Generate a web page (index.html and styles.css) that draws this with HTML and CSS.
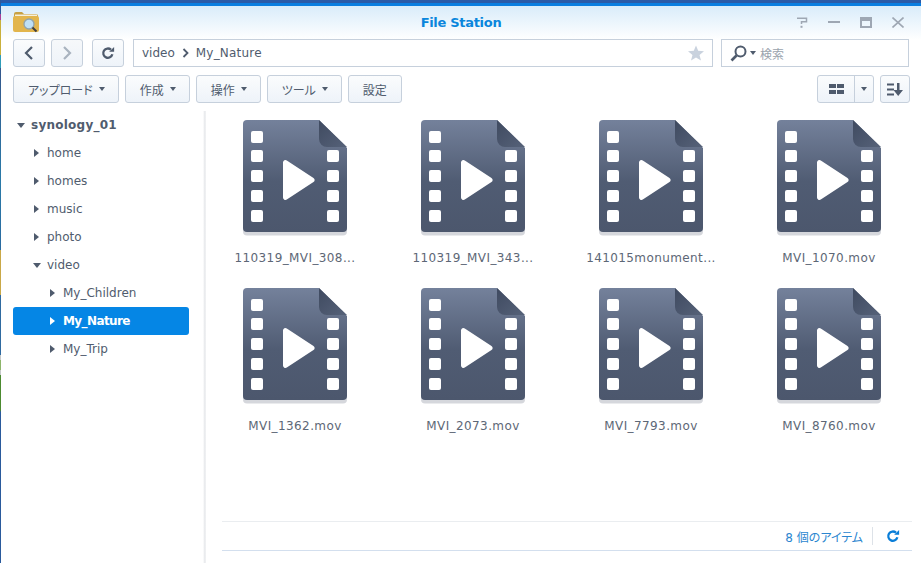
FILE: index.html
```html
<!DOCTYPE html>
<html>
<head>
    <title>File Station</title>
    <link rel="stylesheet" href="styles.css">
</head>
<body>
    <svg class="defs" width="0" height="0">
        <defs>
            <linearGradient id="fileBody" x1="0" y1="0" x2="0" y2="1">
                <stop offset="0" stop-color="#74819b"/>
                <stop offset="0.55" stop-color="#505c73"/>
                <stop offset="1" stop-color="#4c576d"/>
            </linearGradient>
            <linearGradient id="fileFold" x1="0" y1="0" x2="1" y2="1">
                <stop offset="0" stop-color="#3f4a60"/>
                <stop offset="1" stop-color="#566279"/>
            </linearGradient>
            <symbol id="videoFile" viewBox="0 0 104 116">
                <path d="M4 0H76L104 28V110a4 4 0 0 1-4 4H4a4 4 0 0 1-4-4V4a4 4 0 0 1 4-4Z" fill="#d5d7dc" transform="translate(0 1.5)"/>
                <path d="M4 0H76L104 28V108a4 4 0 0 1-4 4H4a4 4 0 0 1-4-4V4a4 4 0 0 1 4-4Z" fill="url(#fileBody)"/>
                <path d="M76 0L104 27H84a8 8 0 0 1-8-8Z" fill="url(#fileFold)"/>
                <g fill="#fff">
                    <rect x="8" y="11" width="12" height="12" rx="2"/>
                    <rect x="8" y="30" width="12" height="12" rx="2"/>
                    <rect x="8" y="50" width="12" height="12" rx="2"/>
                    <rect x="8" y="70" width="12" height="12" rx="2"/>
                    <rect x="8" y="90" width="12" height="12" rx="2"/>
                    <rect x="84" y="30" width="12" height="12" rx="2"/>
                    <rect x="84" y="50" width="12" height="12" rx="2"/>
                    <rect x="84" y="70" width="12" height="12" rx="2"/>
                    <rect x="84" y="90" width="12" height="12" rx="2"/>
                    <path d="M40 42.500a2.500 2.500 0 0 1 3.800-2.100L70.500 57.900a2.500 2.500 0 0 1 0 4.200L43.800 79.600a2.500 2.500 0 0 1-3.800-2.100Z"/>
                </g>
            </symbol>
            <symbol id="reload" viewBox="0 0 16 16">
                <path d="M13 9.500A5.300 5.300 0 1 1 11.400 4.200" fill="none" stroke="currentColor" stroke-width="2.600"/>
                <path d="M9.300 6.700H15V1Z" fill="currentColor"/>
            </symbol>
        </defs>
    </svg>

    <div class="desktop-strip"></div>
    <div class="window">
        <div class="titlebar">
            <svg class="app-icon" width="26" height="22" viewBox="0 0 26 22">
                <path d="M1 3a2 2 0 0 1 2-2h6l2 2h12a2 2 0 0 1 2 2v2H1Z" fill="#c8a143"/>
                <rect x="2" y="3.500" width="22" height="3" fill="#f6f0dc"/>
                <path d="M0 7a2 2 0 0 1 2-2h22a2 2 0 0 1 2 2v12a2 2 0 0 1-2 2H2a2 2 0 0 1-2-2Z" fill="#e2b54d"/>
                <circle cx="16" cy="13" r="5" fill="#bfe0f5" stroke="#8fa3ad" stroke-width="1.300"/>
                <path d="M19.500 16.500L23.500 20.500" stroke="#3f3f3f" stroke-width="2"/>
            </svg>
            <span class="title">File Station</span>
            <div class="win-controls">
                <svg width="12" height="11" viewBox="0 0 12 11"><path d="M1 1.200H10.500V4.800H5.500V7" fill="none" stroke="#9ea7b3" stroke-width="1.500"/><rect x="4.500" y="8.800" width="2" height="2" fill="#9ea7b3"/></svg>
                <svg width="12" height="11" viewBox="0 0 12 11"><rect x="0" y="4" width="12" height="2" fill="#9ea7b3"/></svg>
                <svg width="12" height="11" viewBox="0 0 12 11"><path d="M0 0h12v11H0Z M2 4v5h8V4Z" fill="#9ea7b3" fill-rule="evenodd"/></svg>
                <svg width="12" height="11" viewBox="0 0 12 11"><path d="M0.500 0.500L11.500 10.500M11.500 0.500L0.500 10.500" stroke="#9ea7b3" stroke-width="1.600"/></svg>
            </div>
        </div>

        <div class="navbar">
            <button class="btn btn-nav"><svg width="10" height="14" viewBox="0 0 10 14"><path d="M8 1L2 7L8 13" fill="none" stroke="#4f5b6d" stroke-width="2.200"/></svg></button>
            <button class="btn btn-nav btn-off"><svg width="10" height="14" viewBox="0 0 10 14"><path d="M2 1L8 7L2 13" fill="none" stroke="#a9b3bf" stroke-width="2.200"/></svg></button>
            <button class="btn btn-nav btn-reload"><svg class="reload-icon" width="14" height="14"><use href="#reload"/></svg></button>
            <div class="pathbar">
                <span>video</span>
                <svg width="7" height="10" viewBox="0 0 7 10"><path d="M1.500 1L5.500 5L1.500 9" fill="none" stroke="#505c6e" stroke-width="1.800"/></svg>
                <span class="path-current">My_Nature</span>
                <svg class="star" width="16" height="16" viewBox="0 0 16 16"><path d="M8 0.500L10.200 5.800L16 6.200L11.500 9.900L13 15.500L8 12.500L3 15.500L4.500 9.900L0 6.200L5.800 5.800Z" fill="#c9d2de"/></svg>
            </div>
            <div class="searchbar">
                <svg width="17" height="17" viewBox="0 0 17 17"><circle cx="10.500" cy="6.500" r="5" fill="none" stroke="#4f5b6d" stroke-width="2"/><path d="M6.500 10.500L1.500 15.500" stroke="#4f5b6d" stroke-width="2.600"/></svg>
                <span class="caret"></span>
                <span class="search-hint">検索</span>
            </div>
        </div>

        <div class="toolbar">
            <button class="btn btn-menu">アップロード<span class="caret"></span></button>
            <button class="btn btn-menu">作成<span class="caret"></span></button>
            <button class="btn btn-menu">操作<span class="caret"></span></button>
            <button class="btn btn-menu">ツール<span class="caret"></span></button>
            <button class="btn btn-menu btn-plain">設定</button>
            <div class="view-btns">
                <div class="btn btn-split">
                    <span class="split-main"><svg width="15" height="10" viewBox="0 0 15 10"><path d="M0 0h7v4H0ZM8 0h7v4H8ZM0 6h7v4H0ZM8 6h7v4H8Z" fill="#4f5b6d"/></svg></span>
                    <span class="split-arrow"><span class="caret"></span></span>
                </div>
                <button class="btn btn-sort"><svg width="16" height="13" viewBox="0 0 16 13"><path d="M0 0.500h7v2H0ZM0 5.500h7v2H0ZM0 10.500h7v2H0ZM10 0h2.500v7H16L11.200 13L6.500 7H10Z" fill="#4f5b6d"/></svg></button>
            </div>
        </div>

        <div class="main">
            <ul class="tree">
                <li class="tree-item tree-root"><span class="arrow arrow-open"></span>synology_01</li>
                <li class="tree-item level-1"><span class="arrow"></span>home</li>
                <li class="tree-item level-1"><span class="arrow"></span>homes</li>
                <li class="tree-item level-1"><span class="arrow"></span>music</li>
                <li class="tree-item level-1"><span class="arrow"></span>photo</li>
                <li class="tree-item level-1"><span class="arrow arrow-open"></span>video</li>
                <li class="tree-item level-2"><span class="arrow"></span>My_Children</li>
                <li class="tree-item level-2 selected"><span class="arrow"></span>My_Nature</li>
                <li class="tree-item level-2"><span class="arrow"></span>My_Trip</li>
            </ul>

            <div class="content">
                <div class="files">
                    <div class="file"><svg class="file-icon"><use href="#videoFile"/></svg><div class="file-name">110319_MVI_308...</div></div>
                    <div class="file"><svg class="file-icon"><use href="#videoFile"/></svg><div class="file-name">110319_MVI_343...</div></div>
                    <div class="file"><svg class="file-icon"><use href="#videoFile"/></svg><div class="file-name">141015monument...</div></div>
                    <div class="file"><svg class="file-icon"><use href="#videoFile"/></svg><div class="file-name">MVI_1070.mov</div></div>
                    <div class="file"><svg class="file-icon"><use href="#videoFile"/></svg><div class="file-name">MVI_1362.mov</div></div>
                    <div class="file"><svg class="file-icon"><use href="#videoFile"/></svg><div class="file-name">MVI_2073.mov</div></div>
                    <div class="file"><svg class="file-icon"><use href="#videoFile"/></svg><div class="file-name">MVI_7793.mov</div></div>
                    <div class="file"><svg class="file-icon"><use href="#videoFile"/></svg><div class="file-name">MVI_8760.mov</div></div>
                </div>
                <div class="statusbar">
                    <span class="count">8 個のアイテム</span>
                    <span class="status-sep"></span>
                    <svg class="status-reload" width="14" height="14"><use href="#reload"/></svg>
                </div>
            </div>
        </div>
    </div>
</body>
</html>
```

FILE: styles.css
```css
* {
    box-sizing: border-box;
}
html, body {
    height: 100%;
}
body {
    margin: 0;
    overflow: hidden;
    display: flex;
    background-color: #fff;
    font-family: "DejaVu Sans", "Noto Sans CJK JP", sans-serif;
    font-size: 12px;
    font-feature-settings: "palt";
    color: #505c6e;
}
.defs {
    position: absolute;
}
.desktop-strip {
    width: 1px;
    flex-shrink: 0;
    background: linear-gradient(to bottom, #2a5a9c 0, #2a5a9c 14px, #a8409a 14px, #a8409a 20px, #c9b03c 20px, #c9b03c 55px, #2f9cb8 55px, #2f9cb8 68px, #34578c 68px, #2a7aa8 180px, #2a6aa0 250px, #c9a848 250px, #c9a848 295px, #2f6aa0 295px, #2f6aa0 355px, #c5c8c8 355px, #c5c8c8 360px, #8db56a 360px, #8db56a 370px, #c5c8c8 370px, #c5c8c8 375px, #4c8a30 375px, #4c8a30 410px, #2a5a9c 412px, #2a5a9c 100%);
}
.window {
    flex: 1;
    min-width: 0;
    display: flex;
    flex-direction: column;
    border-top: 3px solid #2a5ba8;
    background: linear-gradient(to bottom, #d9ecfa 3px, #fff 37px) no-repeat;
    background-size: 100% 40px;
}
.window::before {
    content: "";
    height: 3px;
    flex-shrink: 0;
    background-color: #0a7ee0;
}

/* title bar */
.titlebar {
    height: 33px;
    flex-shrink: 0;
    display: flex;
    align-items: center;
    justify-content: center;
    position: relative;
}
.app-icon {
    position: absolute;
    left: 12px;
    top: 5px;
}
.title {
    font-size: 13px;
    font-weight: bold;
    letter-spacing: -0.3px;
    color: #0a86dc;
}
.win-controls {
    position: absolute;
    right: 17px;
    top: 11px;
    display: flex;
    gap: 20px;
}

/* buttons */
.btn {
    height: 28px;
    padding: 0;
    border: 1px solid #c6d0dc;
    border-radius: 3px;
    background: linear-gradient(to bottom, #fbfcfd, #eef3f9);
    font-family: inherit;
    font-size: 12px;
    font-feature-settings: inherit;
    color: #505c6e;
    display: flex;
    align-items: center;
    justify-content: center;
}
.caret {
    display: inline-block;
    width: 0;
    height: 0;
    border-left: 3.5px solid transparent;
    border-right: 3.5px solid transparent;
    border-top: 4px solid #4f5b6d;
}

/* path row */
.navbar {
    height: 28px;
    flex-shrink: 0;
    display: flex;
    margin-left: 12px;
    margin-right: 11px;
}
.btn-nav {
    width: 32px;
    margin-right: 6px;
}
.btn-off {
    background: linear-gradient(to bottom, #f6f8fa, #eef3f9);
}
.btn-reload {
    margin-left: 3px;
    margin-right: 9px;
}
.reload-icon {
    color: #4f5b6d;
}
.pathbar {
    width: 580px;
    display: flex;
    align-items: center;
    gap: 7px;
    padding: 0 8px;
    border: 1px solid #c6d0dc;
    background-color: #fff;
    color: #505c6e;
}
.path-current {
    letter-spacing: 0.2px;
}
.star {
    margin-left: auto;
}
.searchbar {
    width: 188px;
    margin-left: 8px;
    display: flex;
    align-items: center;
    padding-left: 8px;
    border: 1px solid #c6d0dc;
    background-color: #fff;
}
.searchbar .caret {
    margin: 0 4px 0 3px;
}
.search-hint {
    color: #9aa3ad;
}

/* action row */
.toolbar {
    height: 28px;
    margin-top: 8px;
    flex-shrink: 0;
    display: flex;
    gap: 6px;
    margin-left: 12px;
    margin-right: 11px;
}
.btn-menu {
    padding: 0 13px 0 14px;
    gap: 6px;
    color: #505c6e;
}
.btn-plain {
    padding: 0 14px;
}
.view-btns {
    margin-left: auto;
    display: flex;
    gap: 6px;
}
.btn-split {
    width: 57px;
    align-items: stretch;
}
.split-main {
    flex: 1;
    display: flex;
    align-items: center;
    justify-content: center;
    border-right: 1px solid #c6d0dc;
}
.split-arrow {
    width: 18px;
    display: flex;
    align-items: center;
    justify-content: center;
}
.btn-sort {
    width: 30px;
}

/* sidebar + content */
.main {
    flex: 1;
    min-height: 0;
    display: flex;
    margin-top: 8px;
}
.tree {
    width: 205px;
    flex-shrink: 0;
    margin: 0;
    padding: 0 17px 0 12px;
    list-style: none;
    background: linear-gradient(to right, #fff, #e6e8eb 60%, #f4f5f6) no-repeat right top / 3px 100%;
}
.tree-item {
    height: 28px;
    display: flex;
    align-items: center;
    border-radius: 3px;
    color: #505c6e;
    white-space: nowrap;
}
.tree-root {
    font-weight: bold;
    letter-spacing: 0.25px;
    padding-left: 5px;
}
.level-1 {
    padding-left: 21px;
}
.level-2 {
    padding-left: 37px;
}
.arrow {
    width: 0;
    height: 0;
    margin-right: 8px;
    margin-left: 0;
    border-top: 4px solid transparent;
    border-bottom: 4px solid transparent;
    border-left: 5px solid #4f5b6d;
}
.arrow-open {
    margin-left: -1px;
    margin-right: 6px;
    border-left: 4px solid transparent;
    border-right: 4px solid transparent;
    border-top: 5px solid #4f5b6d;
    border-bottom: 0;
}
.selected {
    background-color: #0586e5;
    color: #fff;
    font-weight: bold;
    letter-spacing: -0.6px;
}
.selected .arrow {
    border-left-color: #fff;
}

.content {
    flex: 1;
    min-width: 0;
    display: flex;
    flex-direction: column;
}
.files {
    flex: 1;
    display: grid;
    grid-template-columns: repeat(4, 178px);
    grid-auto-rows: 168px;
    padding-left: 0;
    align-content: start;
}
.file {
    display: flex;
    flex-direction: column;
    align-items: center;
    padding-top: 9px;
}
.file-icon {
    width: 104px;
    height: 116px;
    flex-shrink: 0;
}
.file-name {
    margin-top: 14px;
    line-height: 16px;
    letter-spacing: 0.4px;
    color: #5d6776;
    white-space: nowrap;
}
.statusbar {
    height: 30px;
    margin: 0 9px 12px 16px;
    flex-shrink: 0;
    display: flex;
    align-items: center;
    justify-content: flex-end;
    border-top: 1px solid #eaedf0;
    border-bottom: 1px solid #d3dfee;
}
.count {
    color: #2b86cf;
}
.status-sep {
    width: 1px;
    height: 18px;
    margin: 0 13px 0 9px;
    background-color: #dde2e8;
}
.status-reload {
    color: #0a7ed8;
    margin-right: 12px;
}
```
